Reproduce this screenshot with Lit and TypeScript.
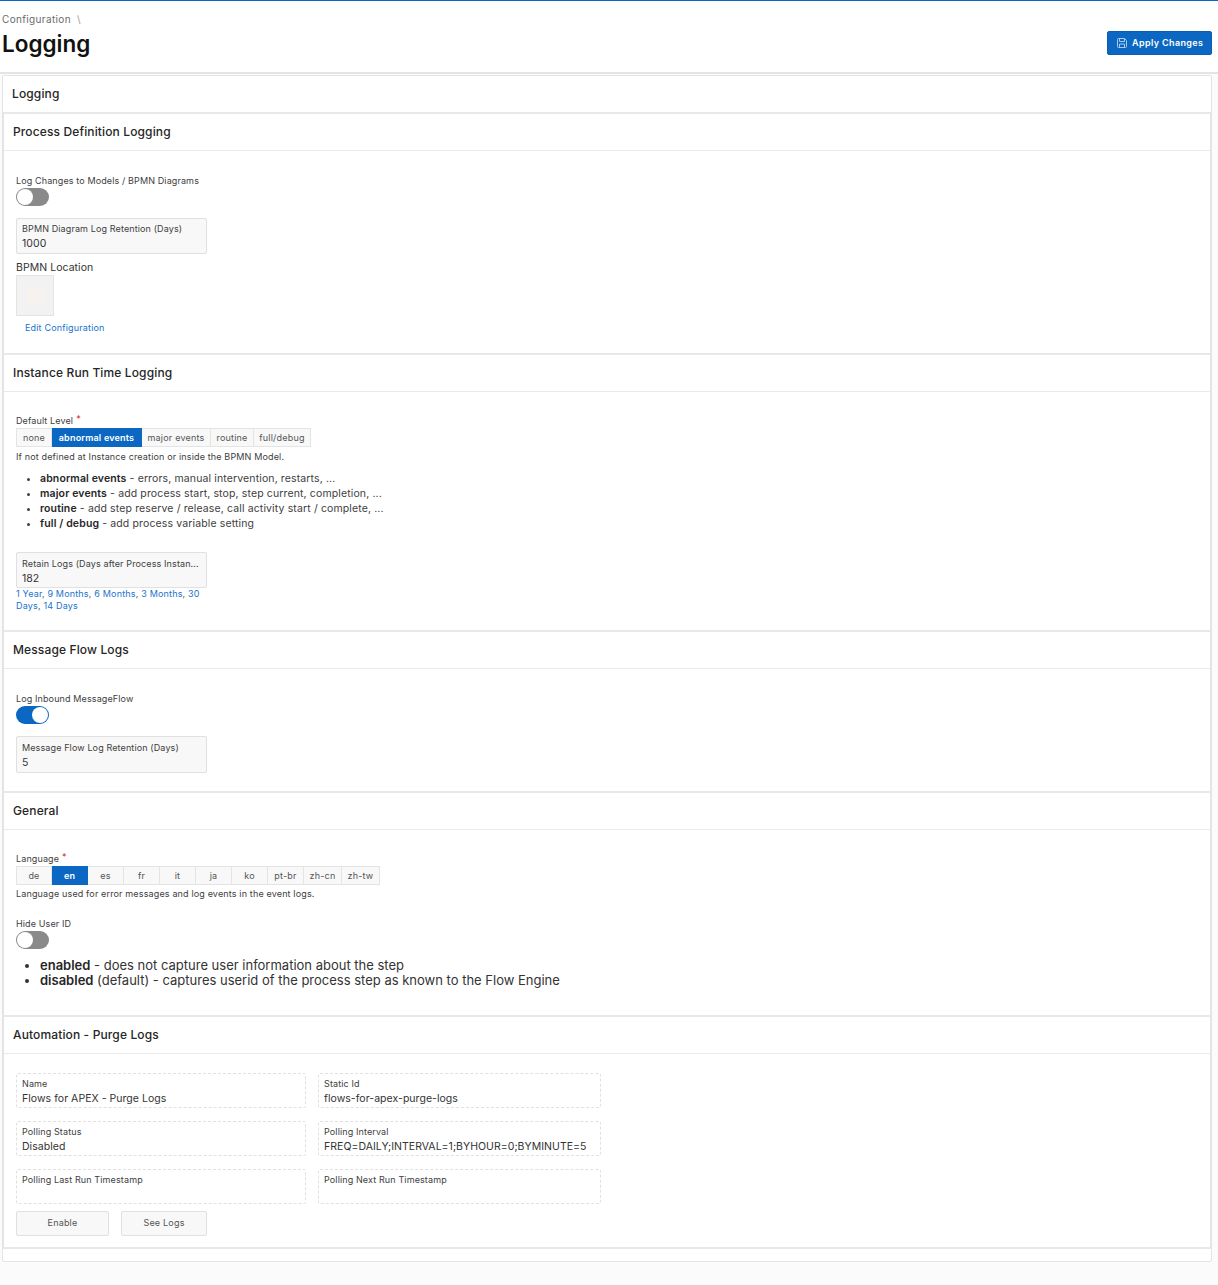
import { LitElement, html, css } from "lit";
import { customElement } from "lit/decorators.js";

@customElement("app-root")
export class AppRoot extends LitElement {
  static styles = css`
    :host { display: block; width: 1218px; min-height: 1285px; background: #fbfbfb; font-family: Inter, "Liberation Sans", sans-serif; color: #262626; box-sizing: border-box; }
    * { box-sizing: border-box; }
    .top { height: 74px; background: #fff; border-top: 1px solid #0b67c2; border-bottom: 2px solid #e4e4e4; display: flex; justify-content: space-between; padding: 0 6px 0 2px; }
    .crumb { font-size: 10px; line-height: 12px; color: #6b6b6b; margin-top: 12px; letter-spacing: .35px; }
    .crumb span { margin-left: 3px; color: #9a9a9a; }
    h1 { margin: 4px 0 0; font-size: 22.5px; line-height: 30px; font-weight: 600; color: #111; }
    .apply { align-self: flex-start; margin-top: 30px; width: 105px; height: 24px; background: #0b67c2; border: 1px solid #0a5fb4; border-radius: 2px; color: #fff; font: 600 9px Inter, sans-serif; letter-spacing: .37px; display: flex; align-items: center; gap: 4px; padding: 0 0 1px 8px; }
    .outer { margin: 1px 6px 0 2px; height: 1187px; background: #fff; border: 1px solid #e4e4e4; border-radius: 2px; }
    .outer > .ohead { height: 36px; padding-left: 9px; font-size: 12px; line-height: 36px; font-weight: 500; letter-spacing: .13px; }
    section { border-top: 2px solid #e8e8e8; border-bottom: 0; border-left: 1px solid #e4e4e4; border-right: 1px solid #e4e4e4; }
    section.last { border-bottom: 2px solid #e8e8e8; }
    .shead { height: 37px; padding-left: 9px; border-bottom: 1px solid #eaeaea; font-size: 12px; line-height: 35px; font-weight: 500; letter-spacing: .13px; }
    .body { padding: 0 12px; display: flow-root; }
    .label { font-size: 9px; line-height: 12px; color: #404040; letter-spacing: .12px; }
    .toggle { width: 33px; height: 18px; border-radius: 9px; background: #8a8a8a; position: relative; margin-top: 1px; }
    .toggle::after { content: ""; position: absolute; width: 16px; height: 16px; border-radius: 50%; background: #fff; top: 1px; left: 1px; }
    .toggle.on { background: #0b67c2; }
    .toggle.on::after { left: 16px; }
    .field { width: 191px; height: 36px; background: #f8f8f8; border: 1px solid #e0e0e0; border-radius: 2px; padding: 4px 5px 0; }
    .field.lower { padding-top: 5px; }
    .field.tall { height: 37px; }
    .field .label, .ro .label { display: block; white-space: nowrap; }
    .value { font-size: 10.5px; line-height: 14px; margin-top: 2px; letter-spacing: .04px; color: #333; }
    .locl { font-size: 10.5px; line-height: 13px; letter-spacing: .05px; color: #333; margin-top: 7px; }
    .loc { width: 38px; height: 41px; background: #f2f2f2; border: 1px solid #e4e4e4; margin-top: 1px; display: flex; align-items: center; justify-content: center; }
    .loc i { display: block; width: 16px; height: 16px; background: #f6f3ef; }
    a { color: #1a73cc; text-decoration: none; }
    .edit { display: block; margin: 6px 0 0 9px; font-size: 9px; line-height: 12px; letter-spacing: .17px; }
    .req { color: #d4281c; font-size: 9px; position: relative; top: -2px; margin-left: 3px; }
    .seg { display: flex; margin-top: 1px; }
    .seg b { display: block; height: 19px; font-size: 9px; font-weight: 400; line-height: 18px; letter-spacing: .2px; text-align: center; background: #f8f8f8; border: 1px solid #e4e4e4; border-left-width: 0; color: #555; }
    .seg b:first-child { border-left-width: 1px; }
    .seg b.sel { background: #0b67c2; border-color: #0b67c2; color: #fff; font-weight: 600; }
    .hint { font-size: 9px; line-height: 12px; letter-spacing: .15px; color: #404040; margin-top: 4px; }
    .hint.tight { margin-top: 3px; }
    ul { margin: 0; padding: 0 0 0 24px; }
    .small { font-size: 10.5px; line-height: 15px; letter-spacing: .13px; color: #404040; margin-top: 8px; }
    .big { font-size: 13px; line-height: 15px; color: #333; margin-top: 9px; }
    li b { font-weight: 600; color: #262626; }
    .links { width: 191px; font-size: 9px; line-height: 12px; letter-spacing: .18px; color: #555; margin-top: 0; }
    .grid { display: grid; grid-template-columns: 290px 283px; gap: 12.5px 12px; margin-top: 18.5px; }
    .ro { height: 35.5px; border: 1px dashed #e0e0e0; border-radius: 2px; padding: 4px 5px 0; }
    .btns { display: flex; gap: 12px; margin-top: 6.5px; }
    .btn { height: 25px; background: #f8f8f8; border: 1px solid #e0e0e0; border-radius: 2px; font-size: 9px; letter-spacing: .2px; color: #555; text-align: center; line-height: 22px; }
  `;

  seg(items: [string, number][], sel: string) {
    return html`<div class="seg">${items.map(([t, w]) => html`<b class=${t === sel ? "sel" : ""} style="width:${w}px">${t}</b>`)}</div>`;
  }

  render() {
    return html`
      <div class="top">
        <div>
          <div class="crumb">Configuration <span>\\</span></div>
          <h1>Logging</h1>
        </div>
        <div class="apply">
          <svg width="12" height="12" viewBox="0 0 12 12" fill="none" stroke="#a9cbef" stroke-width="1"><path d="M2.5 1.5h6l2 2v6a1 1 0 0 1-1 1h-7a1 1 0 0 1-1-1v-7a1 1 0 0 1 1-1z"/><path d="M3.5 1.5v3h5v-3M3.5 10.5v-3.5h5v3.5"/></svg>
          Apply Changes
        </div>
      </div>
      <div class="outer">
        <div class="ohead">Logging</div>

        <section style="height:241px">
          <div class="shead">Process Definition Logging</div>
          <div class="body">
            <div class="label" style="margin-top:24px">Log Changes to Models / BPMN Diagrams</div>
            <div class="toggle"></div>
            <div class="field" style="margin-top:12px"><span class="label">BPMN Diagram Log Retention (Days)</span><div class="value">1000</div></div>
            <div class="locl">BPMN Location</div>
            <div class="loc"><i></i></div>
            <a class="edit">Edit Configuration</a>
          </div>
        </section>

        <section style="height:277px">
          <div class="shead">Instance Run Time Logging</div>
          <div class="body">
            <div class="label" style="margin-top:23px">Default Level<span class="req">*</span></div>
            ${this.seg([["none", 36], ["abnormal events", 90], ["major events", 69], ["routine", 43], ["full/debug", 57]], "abnormal events")}
            <div class="hint">If not defined at Instance creation or inside the BPMN Model.</div>
            <ul class="small">
              <li><b>abnormal events</b> - errors, manual intervention, restarts, ...</li>
              <li><b>major events</b> - add process start, stop, step current, completion, ...</li>
              <li><b>routine</b> - add step reserve / release, call activity start / complete, ...</li>
              <li><b>full / debug</b> - add process variable setting</li>
            </ul>
            <div class="field lower" style="margin-top:21px"><span class="label">Retain Logs (Days after Process Instan...</span><div class="value">182</div></div>
            <div class="links"><a>1 Year</a>, <a>9 Months</a>, <a>6 Months</a>, <a>3 Months</a>, <a>30</a> <a>Days</a>, <a>14 Days</a></div>
          </div>
        </section>

        <section style="height:161px">
          <div class="shead">Message Flow Logs</div>
          <div class="body">
            <div class="label" style="margin-top:24px">Log Inbound MessageFlow</div>
            <div class="toggle on"></div>
            <div class="field lower tall" style="margin-top:12px"><span class="label">Message Flow Log Retention (Days)</span><div class="value">5</div></div>
          </div>
        </section>

        <section style="height:224px">
          <div class="shead">General</div>
          <div class="body">
            <div class="label" style="margin-top:23px">Language<span class="req">*</span></div>
            ${this.seg([["de", 36], ["en", 36], ["es", 36], ["fr", 36], ["it", 36], ["ja", 36], ["ko", 36], ["pt-br", 36], ["zh-cn", 38], ["zh-tw", 38]], "en")}
            <div class="hint tight">Language used for error messages and log events in the event logs.</div>
            <div class="label" style="margin-top:18px">Hide User ID</div>
            <div class="toggle"></div>
            <ul class="big">
              <li><b>enabled</b> - does not capture user information about the step</li>
              <li><b>disabled</b> (default) - captures userid of the process step as known to the Flow Engine</li>
            </ul>
          </div>
        </section>

        <section class="last" style="height:234px">
          <div class="shead">Automation - Purge Logs</div>
          <div class="body">
            <div class="grid">
              <div class="ro"><span class="label">Name</span><div class="value">Flows for APEX - Purge Logs</div></div>
              <div class="ro"><span class="label">Static Id</span><div class="value">flows-for-apex-purge-logs</div></div>
              <div class="ro"><span class="label">Polling Status</span><div class="value">Disabled</div></div>
              <div class="ro"><span class="label">Polling Interval</span><div class="value">FREQ=DAILY;INTERVAL=1;BYHOUR=0;BYMINUTE=5</div></div>
              <div class="ro"><span class="label">Polling Last Run Timestamp</span></div>
              <div class="ro"><span class="label">Polling Next Run Timestamp</span></div>
            </div>
            <div class="btns">
              <div class="btn" style="width:93px">Enable</div>
              <div class="btn" style="width:86px">See Logs</div>
            </div>
          </div>
        </section>
      </div>
    `;
  }
}
